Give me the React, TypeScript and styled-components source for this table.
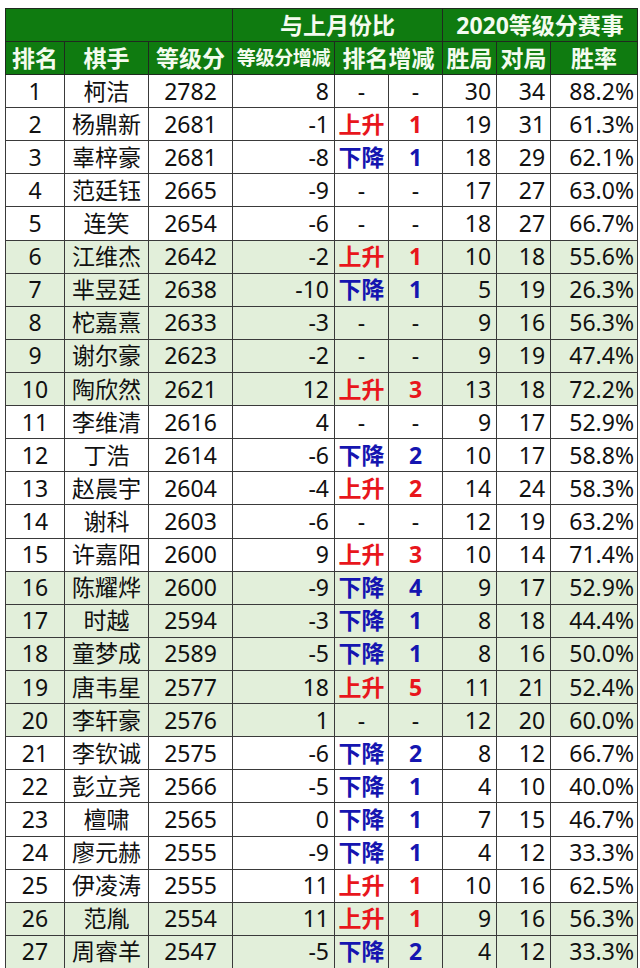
import React from "react";
import styled, { createGlobalStyle } from "styled-components";

const Global = createGlobalStyle`
  html, body { margin: 0; padding: 0; background: #ffffff; }
  body { padding: 8px 0 0 5px; font-family: "Noto Sans", "Noto Sans CJK SC", sans-serif; }
`;

const Table = styled.table`
  border-collapse: collapse;
  table-layout: fixed;
  width: 632px;
  font-family: "Noto Sans", "Noto Sans CJK SC", sans-serif;
  color: #111;
`;

const HeadRow = styled.tr`
  height: 33px;
  background: #0f7b10;
`;

const HeadCell = styled.th<{ $size?: number }>`
  border: 1px solid #1f2a1f;
  color: #f4fbef;
  font-weight: 700;
  font-size: ${(p) => p.$size ?? 23}px;
  line-height: 1;
  padding: 0;
  text-align: center;
  vertical-align: middle;
  white-space: nowrap;
  overflow: hidden;
  letter-spacing: ${(p) => (p.$size && p.$size < 21 ? "-0.3px" : "0")};
`;

const BodyRow = styled.tr<{ $shade: boolean }>`
  height: 33.11px;
  background: ${(p) => (p.$shade ? "#e2efda" : "#ffffff")};
`;

const Cell = styled.td<{ $align?: "left" | "center" | "right"; $pr?: number }>`
  border: 1px solid #3a3a3a;
  font-size: 23px;
  line-height: 1;
  padding: 0 ${(p) => p.$pr ?? 0}px 0 0;
  text-align: ${(p) => p.$align ?? "center"};
  vertical-align: middle;
  white-space: nowrap;
  overflow: hidden;
`;

const Trend = styled.span<{ $dir: "up" | "down" | "none" }>`
  font-weight: ${(p) => (p.$dir === "none" ? 400 : 700)};
  color: ${(p) => (p.$dir === "up" ? "#e8161c" : p.$dir === "down" ? "#1515b0" : "#111")};
`;

type Row = [number, string, number, number, "up" | "down" | "none", string, number, number, string];

const rows: Row[] = [
  [1, "柯洁", 2782, 8, "none", "-", 30, 34, "88.2%"],
  [2, "杨鼎新", 2681, -1, "up", "1", 19, 31, "61.3%"],
  [3, "辜梓豪", 2681, -8, "down", "1", 18, 29, "62.1%"],
  [4, "范廷钰", 2665, -9, "none", "-", 17, 27, "63.0%"],
  [5, "连笑", 2654, -6, "none", "-", 18, 27, "66.7%"],
  [6, "江维杰", 2642, -2, "up", "1", 10, 18, "55.6%"],
  [7, "芈昱廷", 2638, -10, "down", "1", 5, 19, "26.3%"],
  [8, "柁嘉熹", 2633, -3, "none", "-", 9, 16, "56.3%"],
  [9, "谢尔豪", 2623, -2, "none", "-", 9, 19, "47.4%"],
  [10, "陶欣然", 2621, 12, "up", "3", 13, 18, "72.2%"],
  [11, "李维清", 2616, 4, "none", "-", 9, 17, "52.9%"],
  [12, "丁浩", 2614, -6, "down", "2", 10, 17, "58.8%"],
  [13, "赵晨宇", 2604, -4, "up", "2", 14, 24, "58.3%"],
  [14, "谢科", 2603, -6, "none", "-", 12, 19, "63.2%"],
  [15, "许嘉阳", 2600, 9, "up", "3", 10, 14, "71.4%"],
  [16, "陈耀烨", 2600, -9, "down", "4", 9, 17, "52.9%"],
  [17, "时越", 2594, -3, "down", "1", 8, 18, "44.4%"],
  [18, "童梦成", 2589, -5, "down", "1", 8, 16, "50.0%"],
  [19, "唐韦星", 2577, 18, "up", "5", 11, 21, "52.4%"],
  [20, "李轩豪", 2576, 1, "none", "-", 12, 20, "60.0%"],
  [21, "李钦诚", 2575, -6, "down", "2", 8, 12, "66.7%"],
  [22, "彭立尧", 2566, -5, "down", "1", 4, 10, "40.0%"],
  [23, "檀啸", 2565, 0, "down", "1", 7, 15, "46.7%"],
  [24, "廖元赫", 2555, -9, "down", "1", 4, 12, "33.3%"],
  [25, "伊凌涛", 2555, 11, "up", "1", 10, 16, "62.5%"],
  [26, "范胤", 2554, 11, "up", "1", 9, 16, "56.3%"],
  [27, "周睿羊", 2547, -5, "down", "2", 4, 12, "33.3%"],
];

const widths = [59, 84, 84, 102, 54, 54, 54, 54, 87];

export default function App() {
  return (
    <>
      <Global />
      <Table>
        <colgroup>
          {widths.map((w, i) => (
            <col key={i} style={{ width: w }} />
          ))}
        </colgroup>
        <thead>
          <HeadRow>
            <HeadCell colSpan={3} />
            <HeadCell colSpan={3}>与上月份比</HeadCell>
            <HeadCell colSpan={3}>2020等级分赛事</HeadCell>
          </HeadRow>
          <HeadRow>
            <HeadCell>排名</HeadCell>
            <HeadCell>棋手</HeadCell>
            <HeadCell>等级分</HeadCell>
            <HeadCell $size={19}>等级分增减</HeadCell>
            <HeadCell colSpan={2}>排名增减</HeadCell>
            <HeadCell>胜局</HeadCell>
            <HeadCell>对局</HeadCell>
            <HeadCell>胜率</HeadCell>
          </HeadRow>
        </thead>
        <tbody>
          {rows.map((r) => {
            const [rank, name, elo, diff, dir, move, wins, games, rate] = r;
            const shade = Math.floor((rank - 1) / 5) % 2 === 1;
            return (
              <BodyRow key={rank} $shade={shade}>
                <Cell>{rank}</Cell>
                <Cell>{name}</Cell>
                <Cell>{elo}</Cell>
                <Cell $align="right" $pr={5}>{diff}</Cell>
                <Cell>
                  <Trend $dir={dir}>{dir === "up" ? "上升" : dir === "down" ? "下降" : "-"}</Trend>
                </Cell>
                <Cell>
                  <Trend $dir={dir}>{move}</Trend>
                </Cell>
                <Cell $align="right" $pr={5}>{wins}</Cell>
                <Cell $align="right" $pr={5}>{games}</Cell>
                <Cell $align="right" $pr={3}>{rate}</Cell>
              </BodyRow>
            );
          })}
        </tbody>
      </Table>
    </>
  );
}
